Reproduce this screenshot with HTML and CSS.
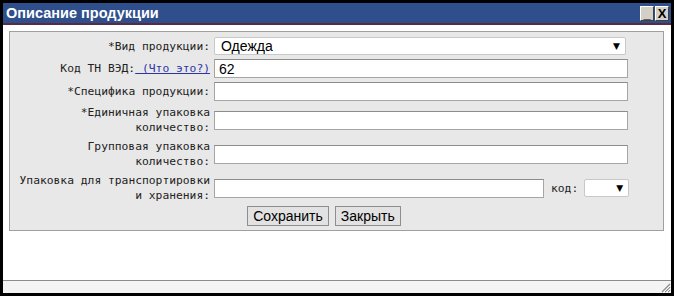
FILE: index.html
```html
<!DOCTYPE html>
<html lang="ru">
<head>
  <meta charset="UTF-8">
  <title>Описание продукции</title>
  <link rel="stylesheet" href="styles.css">
</head>
<body>
  <div class="window">
    <div class="titlebar">
      <span class="title">Описание продукции</span>
      <span class="tbtns">
        <span class="tbtn">_</span><span class="tbtn">X</span>
      </span>
    </div>

    <div class="content">
      <form class="panel" onsubmit="event.preventDefault();">
        <div class="grid">
          <label class="lbl">*Вид продукции:</label>
          <div class="sel wide">
            <select><option>Одежда</option></select>
          </div>

          <label class="lbl">Код ТН ВЭД:<a href="#" class="help">&nbsp;(Что это?)</a></label>
          <input type="text" value="62">

          <label class="lbl">*Специфика продукции:</label>
          <input type="text">

          <label class="lbl">*Единичная упаковка<br>количество:</label>
          <input type="text">

          <label class="lbl">Групповая упаковка<br>количество:</label>
          <input type="text">

          <label class="lbl">Упаковка для транспортировки<br>и хранения:</label>
          <div class="pack">
            <input type="text" class="packin">
            <span class="lbl">код:</span>
            <div class="sel small">
              <select><option></option></select>
            </div>
          </div>
        </div>

        <div class="actions">
          <button type="submit">Сохранить</button>
          <button type="button">Закрыть</button>
        </div>
      </form>
    </div>

    <div class="status">
      <svg class="grip" width="12" height="12" viewBox="0 0 12 12">
        <path d="M11 3 L3 11 M11 6 L6 11 M11 9 L9 11" stroke="#8a8a8a" stroke-width="1.2"/>
        <path d="M12 4 L4 12 M12 7 L7 12 M12 10 L10 12" stroke="#fff" stroke-width="1"/>
      </svg>
    </div>
  </div>
</body>
</html>
```

FILE: styles.css
```css
html, body { margin: 0; padding: 0; background: #fff; }
body { width: 674px; height: 296px; overflow: hidden; }

.window {
  box-sizing: border-box;
  width: 674px;
  height: 296px;
  border: 3px solid #000;
  display: flex;
  flex-direction: column;
  background: #fff;
}

.titlebar {
  height: 20px;
  background: #2f4e8c;
  border-bottom: 2px solid #5a2a3e;
  display: flex;
  align-items: center;
  justify-content: space-between;
  padding: 0 2px 0 3px;
  flex: none;
}
.title {
  color: #fff;
  font: bold 14.5px "Liberation Sans", Arial, sans-serif;
}
.tbtns { display: flex; gap: 1px; }
.tbtn {
  box-sizing: border-box;
  width: 14px;
  height: 15px;
  background: #d4d0c8;
  border: 1px solid;
  border-color: #fff #404040 #404040 #fff;
  color: #000;
  font: bold 13px/13px "Liberation Sans", Arial, sans-serif;
  text-align: center;
}

.content {
  flex: 1;
  padding: 6px 7px 0 6px;
}

.panel {
  margin: 0;
  background: #e8e8e8;
  border: 1px solid #a0a0a0;
  padding: 5px 0 4px 0;
}

.grid {
  display: grid;
  grid-template-columns: 200px 414px;
  column-gap: 4px;
  row-gap: 4px;
  align-items: center;
}

.lbl {
  font: 11.3px/15px "DejaVu Sans Mono", monospace;
  color: #222;
  text-align: right;
}
.help { color: #2b35a8; }

input[type="text"] {
  box-sizing: border-box;
  height: 19px;
  width: 100%;
  margin: 0;
  border: 1px solid #a5a5a5;
  border-top-color: #8c8c8c;
  background: #fff;
  padding: 0 4px;
  font: 14px "Liberation Sans", Arial, sans-serif;
  color: #000;
  outline: none;
}

.sel { position: relative; }
.sel select {
  appearance: none;
  box-sizing: border-box;
  width: 100%;
  height: 18px;
  margin: 0;
  border: 1px solid #c8c8c8;
  border-radius: 2px;
  background: #fff;
  padding: 0 6px;
  font: 14px "Liberation Sans", Arial, sans-serif;
  color: #000;
}
.sel::after {
  content: "▼";
  position: absolute;
  right: 6px;
  top: 4px;
  font: 9px/10px "DejaVu Sans", sans-serif;
  color: #000;
  pointer-events: none;
}
.wide { width: 412px; }
.small { width: 45px; flex: none; }

.pack {
  display: flex;
  align-items: center;
}
.packin { flex: none; width: 330px !important; }
.pack .lbl { margin: 0 6px 0 7px; }

.actions {
  display: flex;
  justify-content: center;
  gap: 6px;
  padding-left: 5px;
  margin-top: 3px;
  width: 618px;
}
.actions button {
  box-sizing: border-box;
  height: 20px;
  padding: 0 5px;
  border: 1px solid #8e8e8e;
  background: #e2e2e2;
  font: 14px "Liberation Sans", Arial, sans-serif;
  color: #000;
  cursor: pointer;
}

.status {
  flex: none;
  height: 12px;
  border-top: 1px solid #8c8c8c;
  background: #f4f4f4;
  position: relative;
}
.grip { position: absolute; right: 0; bottom: 0; }
```
